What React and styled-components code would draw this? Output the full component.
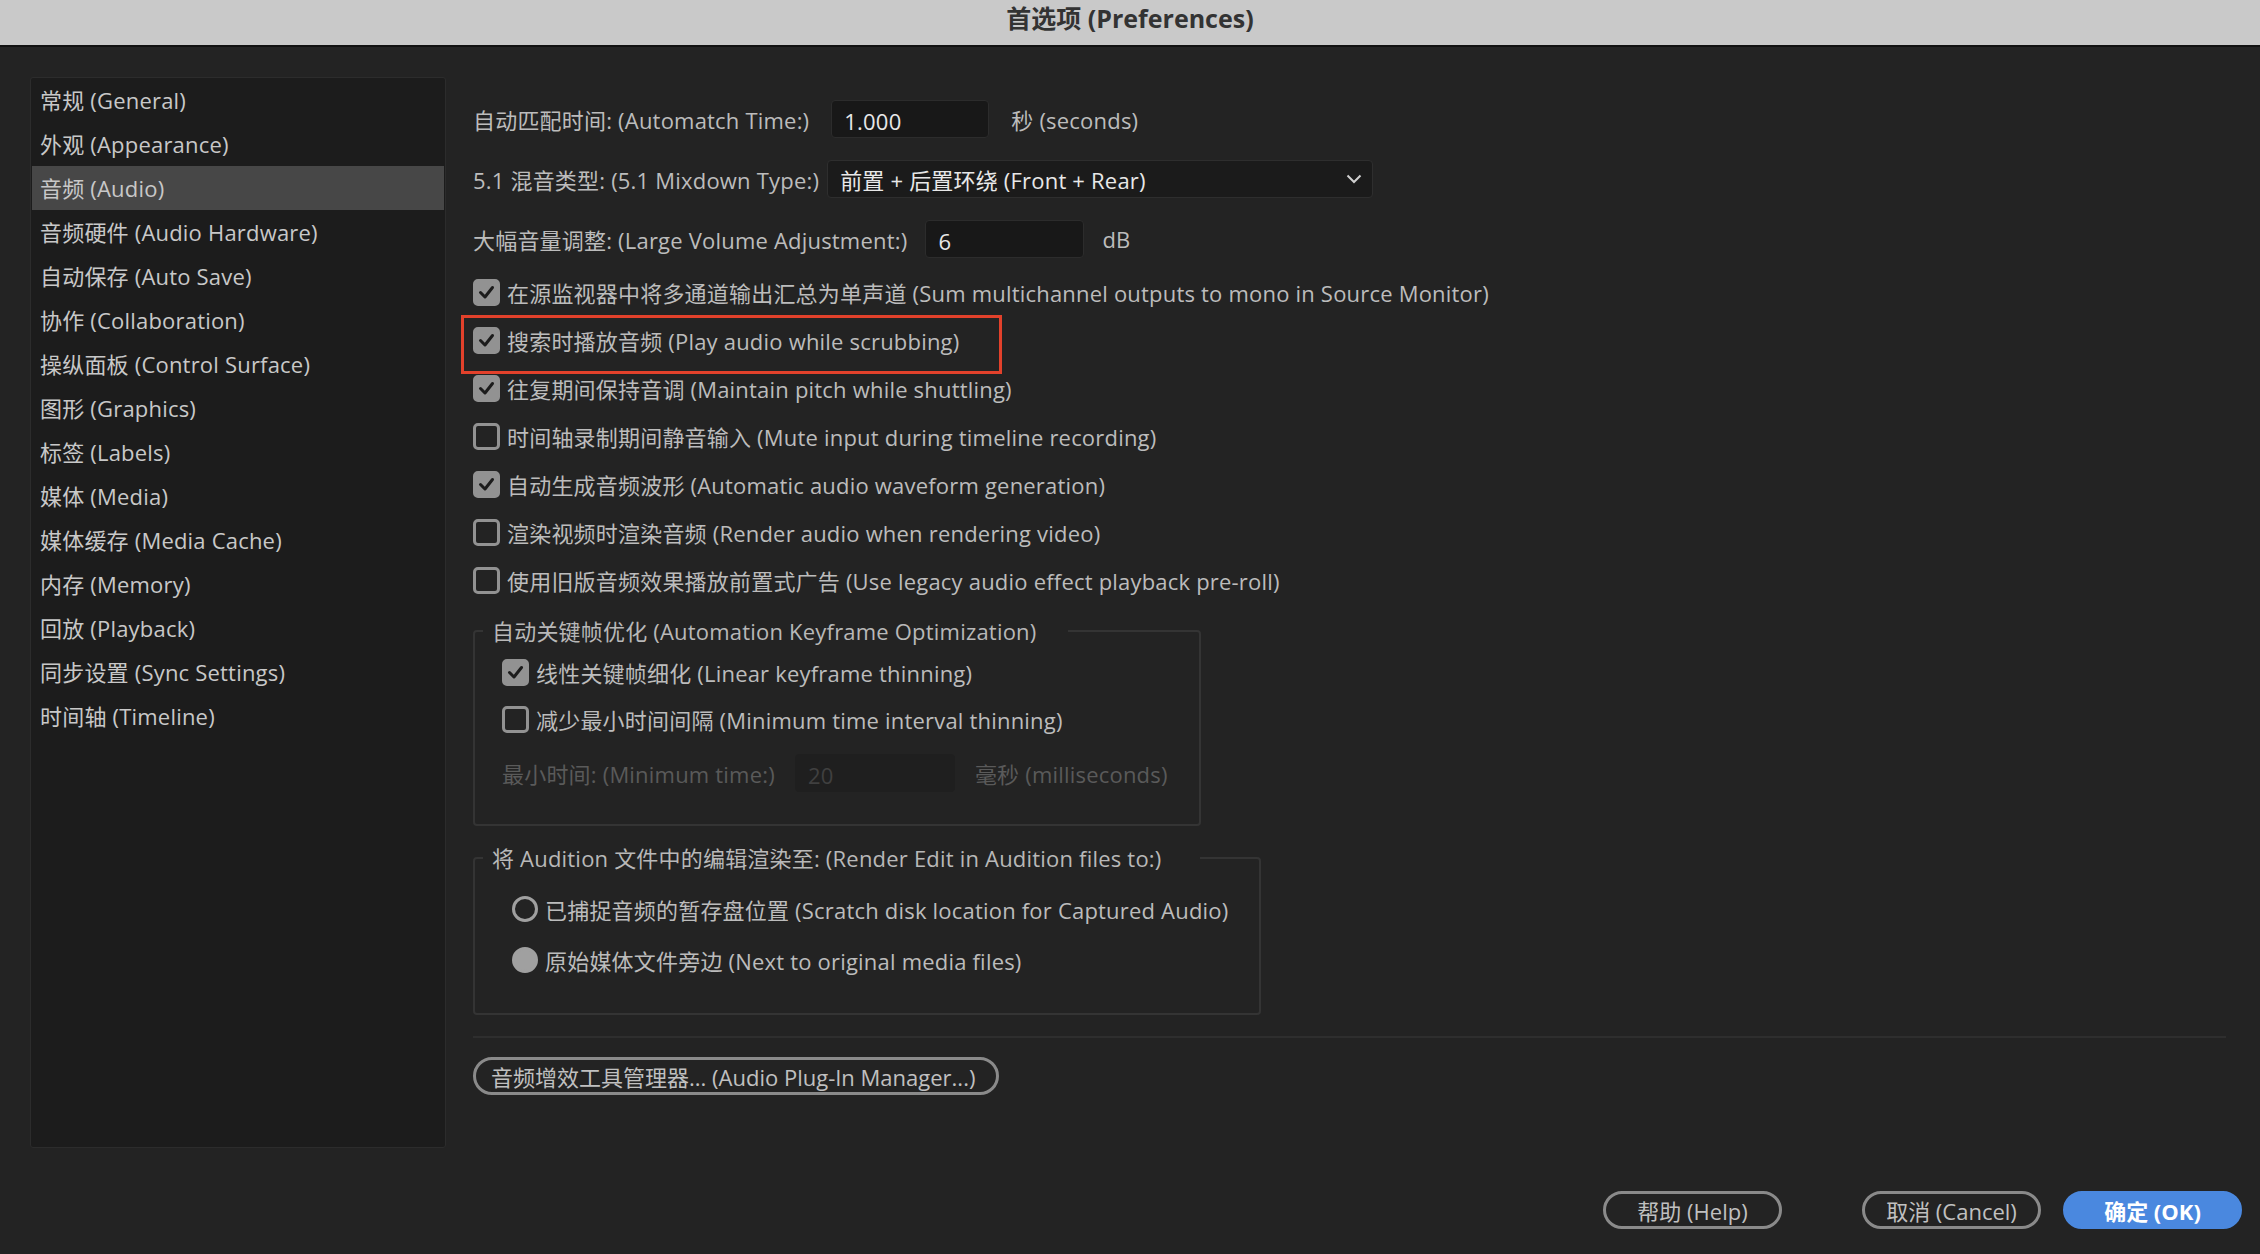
import React from 'react';
import styled, { createGlobalStyle } from 'styled-components';

const GlobalStyle = createGlobalStyle`
  html, body {
    margin: 0;
    padding: 0;
    background: #232323;
  }
  body {
    font-family: "Open Sans", "Noto Sans CJK SC", sans-serif;
    font-size: 22px;
    letter-spacing: 0.2px;
    color: #bcbcbc;
  }
  * { box-sizing: border-box; }
`;

const Window = styled.div`
  width: 2260px;
  height: 1254px;
  display: flex;
  flex-direction: column;
  background: #232323;
  overflow: hidden;
`;

const TitleBar = styled.div`
  height: 47px;
  flex-shrink: 0;
  background: #c9c9c9;
  border-bottom: 2px solid #111;
  display: flex;
  align-items: center;
  justify-content: center;
  font-size: 25px;
  font-weight: 700;
  letter-spacing: 0;
  color: #333;
  padding-bottom: 11px;
`;

const Content = styled.div`
  display: flex;
  padding: 30px 34px 0 30px;
`;

const Sidebar = styled.div`
  width: 416px;
  height: 1071px;
  flex-shrink: 0;
  background: #1c1c1c;
  border: 1px solid #2c2c2c;
  border-radius: 3px;
  padding: 0 1px;
`;

const NavItem = styled.div`
  height: 44px;
  display: flex;
  align-items: center;
  padding: 0 0 2px 8px;
  font-size: 22px;
  color: #c8c8c8;
  background: ${(p) => (p.$active ? '#474747' : 'transparent')};
`;

const Main = styled.div`
  flex: 1;
  margin-left: 27px;
  padding-top: 23px;
  display: flex;
  flex-direction: column;
`;

const FieldRow = styled.div`
  display: flex;
  align-items: center;
  gap: ${(p) => p.$gap || 20}px;
  height: 38px;
  margin-bottom: 22px;
`;

const TextInput = styled.div`
  width: ${(p) => p.$width}px;
  height: 38px;
  background: ${(p) => (p.$disabled ? '#1f1f1f' : '#181818')};
  border: 1px solid ${(p) => (p.$disabled ? '#1f1f1f' : '#2c2c2c')};
  border-radius: 4px;
  display: flex;
  align-items: center;
  padding: 4px 12px 0;
  color: ${(p) => (p.$disabled ? '#404040' : '#e8e8e8')};
`;

const Select = styled.div`
  width: 546px;
  height: 38px;
  background: #1b1b1b;
  border: 1px solid #2e2e2e;
  border-radius: 4px;
  display: flex;
  align-items: center;
  justify-content: space-between;
  padding: 0 10px 0 12px;
  color: #e8e8e8;
`;

const Unit = styled.span`
  color: ${(p) => (p.$disabled ? '#5a5a5a' : '#bcbcbc')};
`;

const CheckList = styled.div`
  display: flex;
  flex-direction: column;
  margin-top: -12px;
`;

const CheckRow = styled.div`
  position: relative;
  height: ${(p) => p.$height || 48}px;
  display: flex;
  align-items: center;
  gap: 7px;
  padding-left: ${(p) => p.$indent || 0}px;
`;

const Box = styled.span`
  width: 27px;
  height: 27px;
  flex-shrink: 0;
  border-radius: 5px;
  border: 3px solid #929292;
  background: ${(p) => (p.$checked ? '#929292' : 'transparent')};
  display: flex;
  align-items: center;
  justify-content: center;
`;

const Radio = styled.span`
  width: 26px;
  height: 26px;
  flex-shrink: 0;
  border-radius: 50%;
  border: 3px solid #a0a0a0;
  background: ${(p) => (p.$filled ? '#a0a0a0' : 'transparent')};
`;

const Highlight = styled.div`
  position: absolute;
  left: -12px;
  top: -1px;
  width: 541px;
  height: 59px;
  border: 3px solid #e2412b;
  pointer-events: none;
`;

const Group = styled.fieldset`
  width: ${(p) => p.$width}px;
  margin: ${(p) => p.$top}px 0 0;
  padding: 0 0 ${(p) => p.$bottom}px;
  border: 2px solid #343434;
  border-radius: 4px;
`;

const Legend = styled.legend`
  margin-left: 8px;
  padding: 0 ${(p) => p.$right}px 0 9px;
  height: 30px;
  line-height: 30px;
  color: #b8b8b8;
`;

const DisabledRow = styled.div`
  display: flex;
  align-items: center;
  gap: 20px;
  height: 40px;
  margin-top: 11px;
  padding-left: 27px;
  color: #5a5a5a;
`;

const Separator = styled.div`
  height: 2px;
  background: #2e2e2e;
  margin-top: 21px;
`;

const PillButton = styled.button`
  font: inherit;
  font-size: 22px;
  height: 38px;
  width: ${(p) => p.$width}px;
  border-radius: 19px;
  border: 3px solid ${(p) => (p.$primary ? '#4a88df' : '#8a8a8a')};
  background: ${(p) => (p.$primary ? '#4a88df' : 'transparent')};
  color: ${(p) => (p.$primary ? '#ffffff' : '#c0c0c0')};
  font-weight: ${(p) => (p.$primary ? 700 : 400)};
  display: flex;
  align-items: center;
  justify-content: ${(p) => (p.$left ? 'flex-start' : 'center')};
  padding: 0 ${(p) => (p.$left ? '15px' : '0')};
  white-space: nowrap;
  cursor: pointer;
`;

const PluginRow = styled.div`
  margin-top: 19px;
`;

const Footer = styled.div`
  display: flex;
  justify-content: flex-end;
  align-items: center;
  margin-top: 43px;
  padding-right: 18px;
`;

const Spacer = styled.div`
  width: ${(p) => p.$w}px;
`;

const navItems = [
  '常规 (General)',
  '外观 (Appearance)',
  '音频 (Audio)',
  '音频硬件 (Audio Hardware)',
  '自动保存 (Auto Save)',
  '协作 (Collaboration)',
  '操纵面板 (Control Surface)',
  '图形 (Graphics)',
  '标签 (Labels)',
  '媒体 (Media)',
  '媒体缓存 (Media Cache)',
  '内存 (Memory)',
  '回放 (Playback)',
  '同步设置 (Sync Settings)',
  '时间轴 (Timeline)',
];

const options = [
  { label: '在源监视器中将多通道输出汇总为单声道 (Sum multichannel outputs to mono in Source Monitor)', checked: true },
  { label: '搜索时播放音频 (Play audio while scrubbing)', checked: true, marked: true },
  { label: '往复期间保持音调 (Maintain pitch while shuttling)', checked: true },
  { label: '时间轴录制期间静音输入 (Mute input during timeline recording)', checked: false },
  { label: '自动生成音频波形 (Automatic audio waveform generation)', checked: true },
  { label: '渲染视频时渲染音频 (Render audio when rendering video)', checked: false },
  { label: '使用旧版音频效果播放前置式广告 (Use legacy audio effect playback pre-roll)', checked: false },
];

const Check = ({ checked }) => (
  <Box $checked={checked}>
    {checked && (
      <svg width="19" height="19" viewBox="0 0 19 19">
        <path d="M3.5 9.5 L8 14 L15.5 4.5" fill="none" stroke="#1c1c1c" strokeWidth="3" strokeLinecap="round" strokeLinejoin="round" />
      </svg>
    )}
  </Box>
);

const Chevron = () => (
  <svg width="16" height="10" viewBox="0 0 16 10">
    <path d="M1.5 1.5 L8 8 L14.5 1.5" fill="none" stroke="#d0d0d0" strokeWidth="2" />
  </svg>
);

export default function App() {
  return (
    <Window>
      <GlobalStyle />
      <TitleBar>首选项 (Preferences)</TitleBar>
      <Content>
        <Sidebar>
          {navItems.map((item) => (
            <NavItem key={item} $active={item === '音频 (Audio)'}>
              {item}
            </NavItem>
          ))}
        </Sidebar>

        <Main>
          <FieldRow $gap={22}>
            <span>自动匹配时间: (Automatch Time:)</span>
            <TextInput $width={158}>1.000</TextInput>
            <Unit>秒 (seconds)</Unit>
          </FieldRow>
          <FieldRow $gap={8}>
            <span>5.1 混音类型: (5.1 Mixdown Type:)</span>
            <Select>
              <span>前置 + 后置环绕 (Front + Rear)</span>
              <Chevron />
            </Select>
          </FieldRow>
          <FieldRow $gap={18}>
            <span>大幅音量调整: (Large Volume Adjustment:)</span>
            <TextInput $width={159}>6</TextInput>
            <Unit>dB</Unit>
          </FieldRow>

          <CheckList>
            {options.map((opt) => (
              <CheckRow key={opt.label}>
                <Check checked={opt.checked} />
                <span>{opt.label}</span>
                {opt.marked && <Highlight />}
              </CheckRow>
            ))}
          </CheckList>

          <Group $width={728} $top={12} $bottom={31}>
            <Legend $right={32}>自动关键帧优化 (Automation Keyframe Optimization)</Legend>
            <CheckRow $indent={27} $height={48} style={{ marginTop: 2 }}>
              <Check checked />
              <span>线性关键帧细化 (Linear keyframe thinning)</span>
            </CheckRow>
            <CheckRow $indent={27} $height={46}>
              <Check checked={false} />
              <span>减少最小时间间隔 (Minimum time interval thinning)</span>
            </CheckRow>
            <DisabledRow>
              <span>最小时间: (Minimum time:)</span>
              <TextInput $width={160} $disabled>20</TextInput>
              <Unit $disabled>毫秒 (milliseconds)</Unit>
            </DisabledRow>
          </Group>

          <Group $width={788} $top={17} $bottom={29}>
            <Legend $right={38}>将 Audition 文件中的编辑渲染至: (Render Edit in Audition files to:)</Legend>
            <CheckRow $indent={37} $height={48} style={{ marginTop: 12 }}>
              <Radio />
              <span>已捕捉音频的暂存盘位置 (Scratch disk location for Captured Audio)</span>
            </CheckRow>
            <CheckRow $indent={37} $height={48} style={{ marginTop: 3 }}>
              <Radio $filled />
              <span>原始媒体文件旁边 (Next to original media files)</span>
            </CheckRow>
          </Group>

          <Separator />

          <PluginRow>
            <PillButton $width={526} $left>音频增效工具管理器... (Audio Plug-In Manager...)</PillButton>
          </PluginRow>
        </Main>
      </Content>

      <Footer>
        <PillButton $width={179}>帮助 (Help)</PillButton>
        <Spacer $w={80} />
        <PillButton $width={179}>取消 (Cancel)</PillButton>
        <Spacer $w={22} />
        <PillButton $width={179} $primary>确定 (OK)</PillButton>
      </Footer>
    </Window>
  );
}
